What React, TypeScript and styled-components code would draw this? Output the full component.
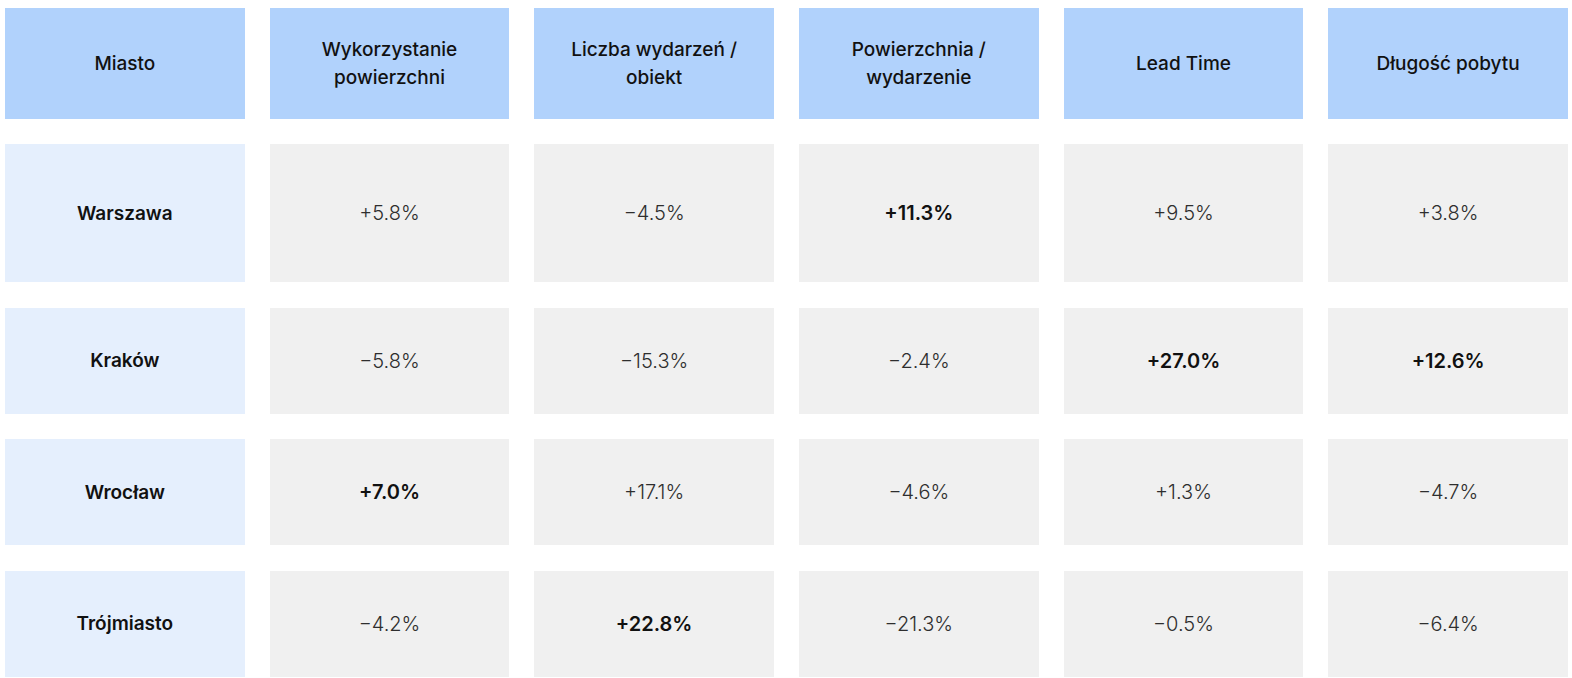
import { FC, Fragment } from 'react'
import styled, { createGlobalStyle } from 'styled-components'

type Value = { text: string; strong?: boolean }

type Row = {
  city: string
  values: Value[]
}

const headers = [
  'Miasto',
  'Wykorzystanie\npowierzchni',
  'Liczba wydarzeń /\nobiekt',
  'Powierzchnia /\nwydarzenie',
  'Lead Time',
  'Długość pobytu'
]

const rows: Row[] = [
  {
    city: 'Warszawa',
    values: [{ text: '+5.8%' }, { text: '−4.5%' }, { text: '+11.3%', strong: true }, { text: '+9.5%' }, { text: '+3.8%' }]
  },
  {
    city: 'Kraków',
    values: [
      { text: '−5.8%' },
      { text: '−15.3%' },
      { text: '−2.4%' },
      { text: '+27.0%', strong: true },
      { text: '+12.6%', strong: true }
    ]
  },
  {
    city: 'Wrocław',
    values: [{ text: '+7.0%', strong: true }, { text: '+17.1%' }, { text: '−4.6%' }, { text: '+1.3%' }, { text: '−4.7%' }]
  },
  {
    city: 'Trójmiasto',
    values: [{ text: '−4.2%' }, { text: '+22.8%', strong: true }, { text: '−21.3%' }, { text: '−0.5%' }, { text: '−6.4%' }]
  }
]

const App: FC = () => {
  return (
    <>
      <GlobalStyle />
      <Table>
        {headers.map((h) => (
          <HeaderCell key={h}>{h}</HeaderCell>
        ))}
        {rows.map((row) => (
          <Fragment key={row.city}>
            <CityCell>{row.city}</CityCell>
            {row.values.map((v, i) => (
              <ValueCell key={i} $strong={v.strong}>
                {v.text}
              </ValueCell>
            ))}
          </Fragment>
        ))}
      </Table>
    </>
  )
}

const GlobalStyle = createGlobalStyle`
  body {
    margin: 0;
    background: #ffffff;
    font-family: Inter, 'Noto Sans', sans-serif;
    -webkit-font-smoothing: antialiased;
  }
`

const Table = styled.div`
  display: grid;
  grid-template-columns: repeat(6, 1fr);
  grid-template-rows: 111px 138px 106px 106px 106px;
  column-gap: 25px;
  row-gap: 25.4px;
  padding: 8px 4px 0 5px;
`

const Cell = styled.div`
  display: flex;
  align-items: center;
  justify-content: center;
  text-align: center;
  font-size: 19px;
`

const HeaderCell = styled(Cell)`
  background-color: #b1d2fc;
  color: #111111;
  font-weight: 500;
  line-height: 28px;
  white-space: pre-line;
`

const CityCell = styled(Cell)`
  background-color: #e5effd;
  color: #111111;
  font-weight: 600;
`

const ValueCell = styled(Cell)<{ $strong?: boolean }>`
  background-color: #f0f0f0;
  color: ${(p) => (p.$strong ? '#111111' : '#2e2e2e')};
  font-size: 20px;
  font-weight: ${(p) => (p.$strong ? 600 : 300)};
`

export default App
